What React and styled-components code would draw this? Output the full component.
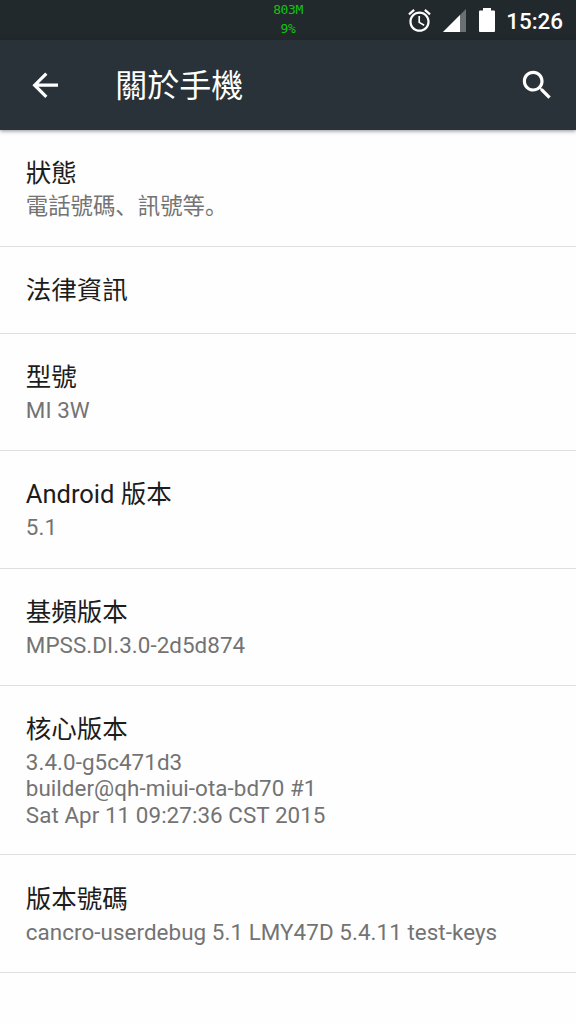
import React from "react";
import styled, { createGlobalStyle } from "styled-components";

const GlobalStyle = createGlobalStyle`
  * { box-sizing: border-box; }
  body {
    margin: 0;
    background: #fefefe;
    font-family: Roboto, "Noto Sans CJK SC", sans-serif;
  }
`;

const Screen = styled.div`
  width: 576px;
  height: 1024px;
  overflow: hidden;
  display: flex;
  flex-direction: column;
  background: #fefefe;
`;

const StatusBar = styled.header`
  height: 40px;
  flex: none;
  display: grid;
  grid-template-columns: 1fr auto 1fr;
  background: #22292c;
  color: #fff;
`;

const Monitor = styled.div`
  grid-column: 2;
  text-align: center;
  font: 13px/19px "DejaVu Sans Mono", monospace;
  letter-spacing: -0.4px;
  color: #0fc40f;
`;

const StatusIcons = styled.div`
  display: flex;
  align-items: center;
  justify-content: flex-end;
  padding-right: 13px;
`;

const AlarmIcon = styled.svg`
  width: 27px;
  height: 27px;
  margin-right: 10px;
`;

const SignalIcon = styled.svg`
  width: 23px;
  height: 23px;
  margin-right: 13px;
`;

const BatteryIcon = styled.svg`
  width: 16px;
  height: 24px;
  margin-right: 11px;
`;

const Clock = styled.span`
  font-size: 22.4px;
  line-height: 26px;
  font-weight: 500;
  padding-top: 2px;
`;

const Toolbar = styled.nav`
  height: 89.6px;
  flex: none;
  display: flex;
  align-items: center;
  padding: 0 19.2px 0 25.6px;
  background: #283238;
  color: #fff;
  box-shadow: 0 1px 4px rgba(30, 30, 45, 0.5);
`;

const ToolbarIcon = styled.svg`
  width: 38.4px;
  height: 38.4px;
  fill: #fff;
`;

const Heading = styled.h1`
  flex: 1;
  margin: 0;
  padding: 2px 0 0 51.2px;
  font-size: 32px;
  line-height: 40px;
  font-weight: 400;
`;

const List = styled.main`
  display: flex;
  flex-direction: column;
`;

const Row = styled.section`
  height: ${({ $height }) => $height}px;
  padding: 26.4px 25.8px 0;
  border-bottom: 1px solid #dedede;
`;

const Title = styled.h2`
  margin: 0;
  font-size: 25.5px;
  line-height: 34px;
  font-weight: 400;
  color: #1c1c1c;
`;

const Summary = styled.p`
  margin: 3px 0 0;
  font-size: 22.4px;
  line-height: 26.2px;
  letter-spacing: ${({ $tracking }) => $tracking}px;
  color: #737373;
  white-space: pre-line;
`;

const items = [
  { title: "狀態", summary: "電話號碼、訊號等。", height: 117.2, tracking: 0 },
  { title: "法律資訊", height: 87 },
  { title: "型號", summary: "MI 3W", height: 117.3 },
  { title: "Android 版本", summary: "5.1", height: 117.5 },
  { title: "基頻版本", summary: "MPSS.DI.3.0-2d5d874", height: 117.3 },
  {
    title: "核心版本",
    summary:
      "3.4.0-g5c471d3\nbuilder@qh-miui-ota-bd70 #1\nSat Apr 11 09:27:36 CST 2015",
    height: 169.3,
  },
  {
    title: "版本號碼",
    summary: "cancro-userdebug 5.1 LMY47D 5.4.11 test-keys",
    height: 117.5,
  },
];

export default function App() {
  return (
    <Screen lang="zh">
      <GlobalStyle />
      <StatusBar>
        <Monitor>
          <div>803M</div>
          <div>9%</div>
        </Monitor>
        <StatusIcons>
          <AlarmIcon viewBox="0 0 24 24" fill="#fff">
            <path d="M22 5.72l-4.6-3.86-1.29 1.53 4.6 3.86L22 5.72zM7.88 3.39L6.6 1.86 2 5.71l1.29 1.53 4.59-3.85zM12.5 8H11v6l4.75 2.85.75-1.23-4-2.37V8zM12 4c-4.97 0-9 4.03-9 9s4.02 9 9 9c4.97 0 9-4.03 9-9s-4.03-9-9-9zm0 16c-3.87 0-7-3.13-7-7s3.13-7 7-7 7 3.13 7 7-3.13 7-7 7z" />
          </AlarmIcon>
          <SignalIcon viewBox="0 0 23 23">
            <path d="M0 23L23 0V23Z" fill="#6b7072" />
            <path d="M0 23L17 6V23Z" fill="#fff" />
          </SignalIcon>
          <BatteryIcon viewBox="0 0 16 24">
            <path
              d="M4 0H12V2.5H15Q16 2.5 16 3.5V23Q16 24 15 24H1Q0 24 0 23V3.5Q0 2.5 1 2.5H4Z"
              fill="#fff"
            />
          </BatteryIcon>
          <Clock>15:26</Clock>
        </StatusIcons>
      </StatusBar>
      <Toolbar>
        <ToolbarIcon viewBox="0 0 24 24">
          <path d="M20 11H7.83l5.59-5.59L12 4l-8 8 8 8 1.41-1.41L7.83 13H20v-2z" />
        </ToolbarIcon>
        <Heading>關於手機</Heading>
        <ToolbarIcon viewBox="0 0 24 24">
          <path d="M15.5 14h-.79l-.28-.27C15.41 12.59 16 11.11 16 9.5 16 5.91 13.09 3 9.5 3S3 5.91 3 9.5 5.91 16 9.5 16c1.61 0 3.09-.59 4.23-1.57l.27.28v.79l5 4.99L20.49 19l-4.99-5zm-6 0C7.01 14 5 11.99 5 9.5S7.01 5 9.5 5 14 7.01 14 9.5 11.99 14 9.5 14z" />
        </ToolbarIcon>
      </Toolbar>
      <List>
        {items.map(({ title, summary, height, tracking = 0.06 }) => (
          <Row key={title} $height={height}>
            <Title>{title}</Title>
            {summary && <Summary $tracking={tracking}>{summary}</Summary>}
          </Row>
        ))}
      </List>
    </Screen>
  );
}
